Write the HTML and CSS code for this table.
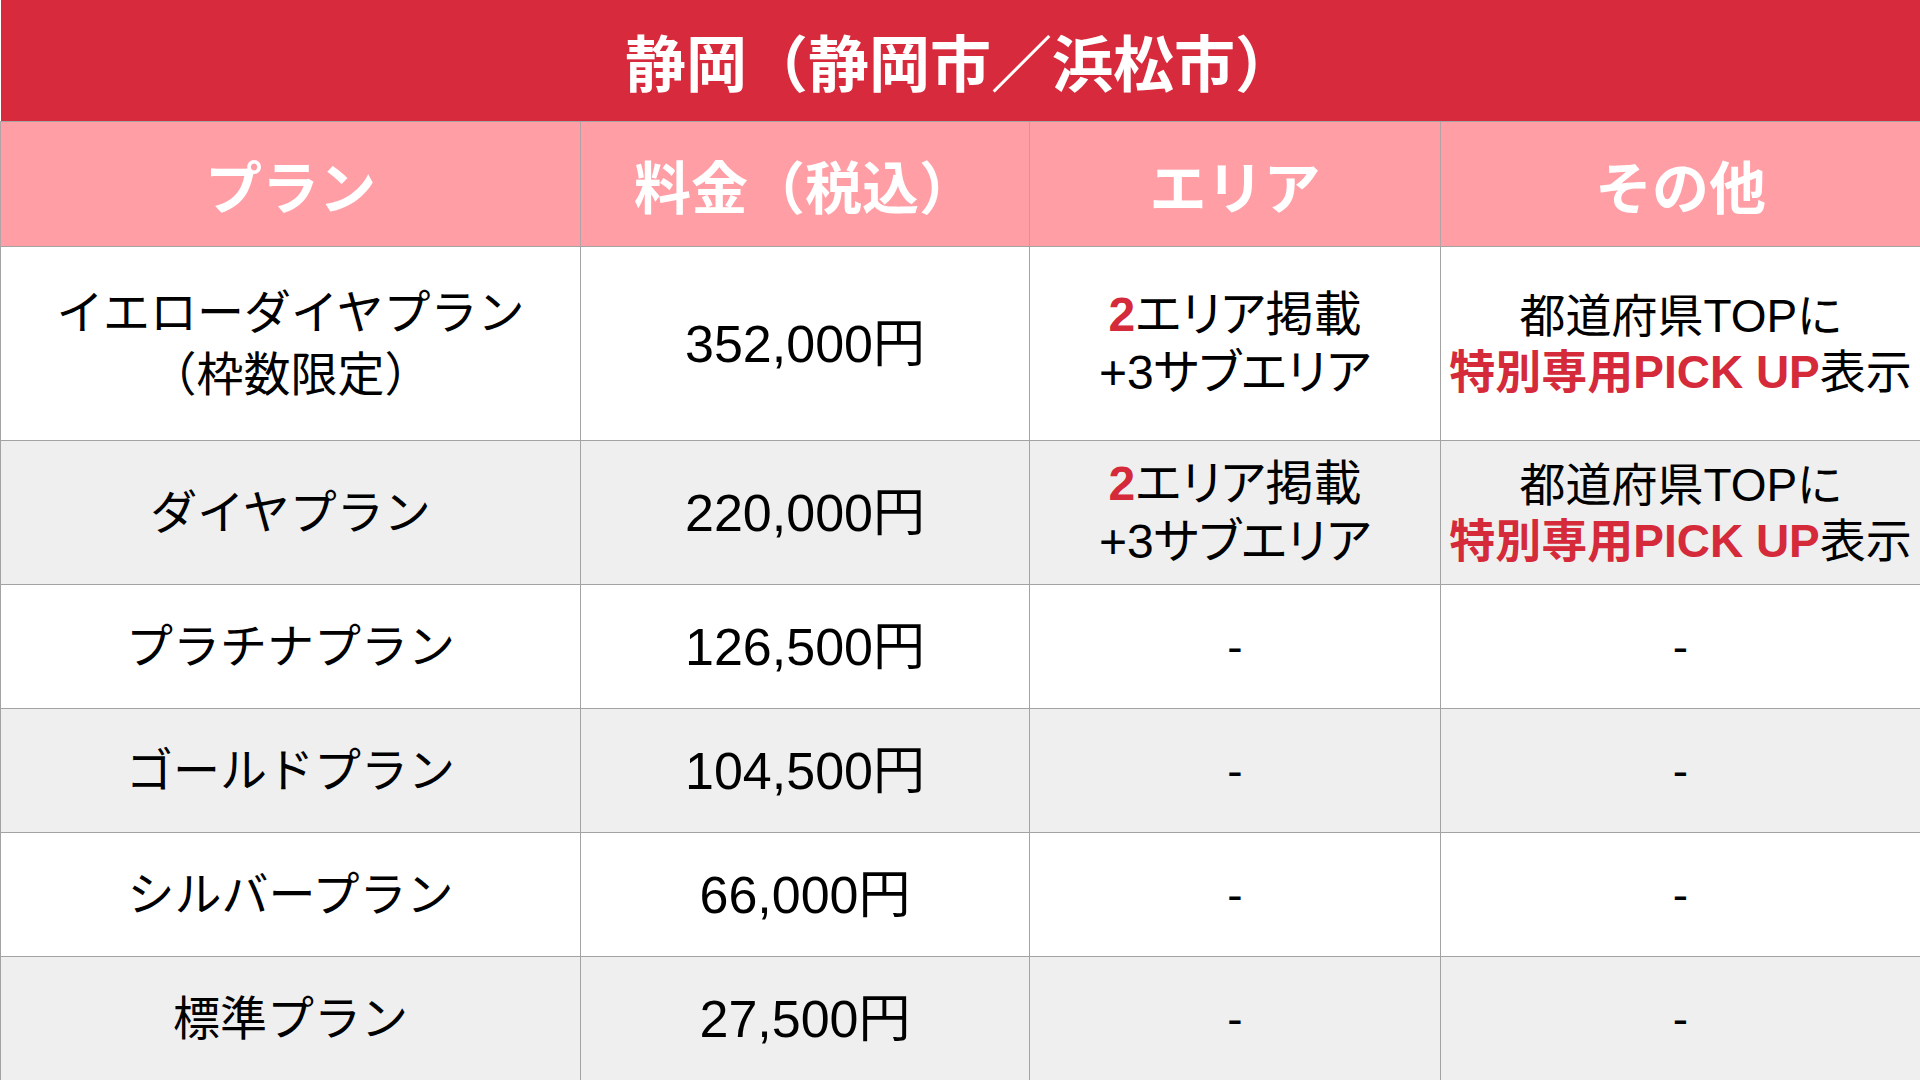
FILE: index.html
```html
<!DOCTYPE html>
<html lang="ja">
<head>
<meta charset="utf-8">
<title>静岡 料金表</title>
<link rel="stylesheet" href="styles.css">
</head>
<body>
<table class="price-table">
  <colgroup>
    <col class="col-plan">
    <col class="col-price">
    <col class="col-area">
    <col class="col-other">
  </colgroup>
  <thead>
    <tr class="title-row"><th colspan="4">静岡（静岡市／浜松市）</th></tr>
    <tr class="head-row"><th>プラン</th><th>料金（税込）</th><th>エリア</th><th>その他</th></tr>
  </thead>
  <tbody>
    <tr class="row-tall">
      <td class="plan">イエローダイヤプラン<br>（枠数限定）</td>
      <td class="price">352,000円</td>
      <td class="area"><span class="em">2</span>エリア掲載<br>+3サブエリア</td>
      <td class="other">都道府県TOPに<br><span class="em-jp">特別専用</span><span class="em">PICK UP</span>表示</td>
    </tr>
    <tr class="row-mid alt">
      <td class="plan">ダイヤプラン</td>
      <td class="price">220,000円</td>
      <td class="area"><span class="em">2</span>エリア掲載<br>+3サブエリア</td>
      <td class="other">都道府県TOPに<br><span class="em-jp">特別専用</span><span class="em">PICK UP</span>表示</td>
    </tr>
    <tr class="row-std">
      <td class="plan">プラチナプラン</td>
      <td class="price">126,500円</td>
      <td class="dash">-</td>
      <td class="dash">-</td>
    </tr>
    <tr class="row-std alt">
      <td class="plan">ゴールドプラン</td>
      <td class="price">104,500円</td>
      <td class="dash">-</td>
      <td class="dash">-</td>
    </tr>
    <tr class="row-std">
      <td class="plan">シルバープラン</td>
      <td class="price">66,000円</td>
      <td class="dash">-</td>
      <td class="dash">-</td>
    </tr>
    <tr class="row-std alt">
      <td class="plan">標準プラン</td>
      <td class="price">27,500円</td>
      <td class="dash">-</td>
      <td class="dash">-</td>
    </tr>
  </tbody>
</table>
</body>
</html>
```

FILE: styles.css
```css
html, body {
  margin: 0;
  padding: 0;
  background: #ffffff;
}

body {
  width: 1920px;
  height: 1080px;
  overflow: hidden;
  font-family: "Liberation Sans", "Noto Sans CJK JP", sans-serif;
  color: #000000;
  text-spacing-trim: space-all;
}

.price-table {
  width: 1920px;
  height: 1080px;
  border-collapse: collapse;
  table-layout: fixed;
}

.col-plan { width: 580px; }
.col-price { width: 449px; }
.col-area { width: 411px; }
.col-other { width: 480px; }

.price-table th,
.price-table td {
  padding: 0;
  text-align: center;
  vertical-align: middle;
  border: 1px solid #a3a3a3;
  white-space: nowrap;
}

.title-row th {
  height: 121px;
  background: #d72a3c;
  color: #ffffff;
  font-family: "Noto Sans CJK JP", sans-serif;
  font-weight: 700;
  font-size: 61px;
  line-height: 1;
  border-top: none;
  border-left: none;
  border-right: none;
}

.head-row th {
  height: 124px;
  background: #ff9ea5;
  color: #ffffff;
  font-family: "Noto Sans CJK JP", sans-serif;
  font-weight: 700;
  font-size: 57px;
  line-height: 1;
  border-color: #b3a3a5;
  border-top-color: #a3a3a3;
  border-bottom-color: #a3a3a3;
}

.row-tall td { height: 193px; }
.row-mid td { height: 143px; }
.row-std td { height: 123px; }

.alt td { background: #efefef; }

.plan {
  font-size: 47px;
  line-height: 62px;
}

.price {
  font-size: 52px;
  line-height: 1;
}

.area {
  font-size: 48px;
  line-height: 58px;
  font-feature-settings: "palt" 1;
}

.other {
  font-size: 46px;
  line-height: 56px;
  font-feature-settings: "palt" 1;
}

.dash {
  font-size: 46px;
  line-height: 1;
}

.em {
  color: #d42a3a;
  font-weight: 700;
}

.em-jp {
  color: #d42a3a;
  font-weight: 700;
}
```
